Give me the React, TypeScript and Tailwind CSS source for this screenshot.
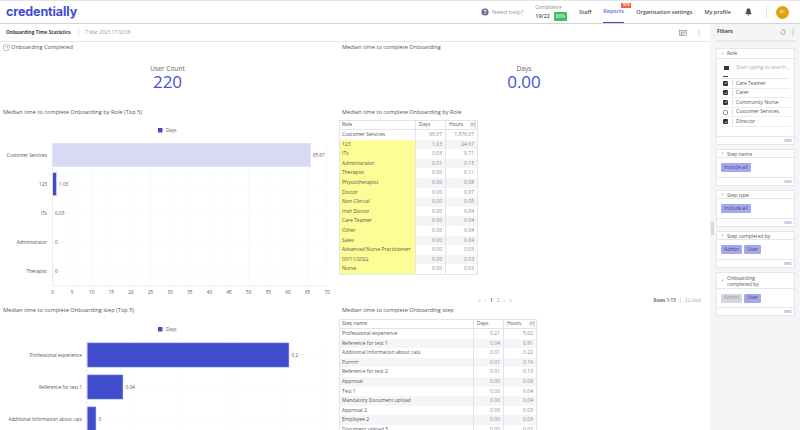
import React from "react";

const FONT = { fontFamily: '"Open Sans", sans-serif' };

const roleRows: [string, string, string][] = [
  ["Customer Services", "65.67", "1,576.07"],
  ["123", "1.03", "24.67"],
  ["ITs", "0.03", "0.71"],
  ["Administrator", "0.01", "0.15"],
  ["Therapist", "0.00", "0.11"],
  ["Physiotherapist", "0.00", "0.08"],
  ["Doctor", "0.00", "0.07"],
  ["Non-Clinical", "0.00", "0.05"],
  ["Irish Doctor", "0.00", "0.04"],
  ["Care Teamer", "0.00", "0.04"],
  ["Other", "0.00", "0.04"],
  ["Sales", "0.00", "0.04"],
  ["Advanced Nurse Practitionerr", "0.00", "0.03"],
  ["03/11/2022", "0.00", "0.03"],
  ["Nurse", "0.00", "0.03"],
];

const stepRows: [string, string, string][] = [
  ["Professional experience", "0.21", "5.02"],
  ["Reference for test 1", "0.04", "0.91"],
  ["Additional Information about cats", "0.01", "0.22"],
  ["Purrrrr", "0.01", "0.16"],
  ["Reference for test 2", "0.01", "0.13"],
  ["Approval", "0.00", "0.09"],
  ["Test 1", "0.00", "0.04"],
  ["Mandatory Document upload", "0.00", "0.04"],
  ["Approval 2", "0.00", "0.03"],
  ["Employee 2", "0.00", "0.03"],
  ["Document upload 5", "0.00", "0.02"],
];

function SortIcon() {
  return (
    <svg width="6" height="6" viewBox="0 0 6 6" fill="none" stroke="#777" strokeWidth="0.5">
      <path d="M0.5 1H5.5V0.5M0.5 2.5H4M0.5 4H3M5 1.5V5.5" />
    </svg>
  );
}

function DataTable({
  head,
  rows,
  widths,
  highlight,
}: {
  head: string;
  rows: [string, string, string][];
  widths: string[];
  highlight?: boolean;
}) {
  return (
    <div className="flex flex-col border border-[#e3e3ea] w-fit text-[5px] text-[#555] font-medium">
      <div className="flex h-[9px] items-center border-b border-[#e3e3ea]">
        <div className={`${widths[0]} pl-[2px]`}>{head}</div>
        <div className={`${widths[1]} h-full flex items-center border-l border-[#e3e3ea] pl-[3px]`}>Days</div>
        <div className={`${widths[2]} h-full flex items-center justify-between border-l border-[#e3e3ea] pl-[3px] pr-[1px]`}>
          Hours
          <SortIcon />
        </div>
      </div>
      {rows.map((r, i) => (
        <div key={r[0]} className={`flex h-[9.6px] items-center ${i % 2 === 1 ? "bg-[#f4f5f9]" : "bg-white"}`}>
          <div
            className={`${widths[0]} h-full flex items-center pl-[2px] whitespace-nowrap ${
              highlight && i > 0 ? "bg-[#fdfd96]" : ""
            }`}
          >
            {r[0]}
          </div>
          <div className={`${widths[1]} h-full flex items-center justify-end border-l border-[#e3e3ea] pr-[3px] text-[#888] font-normal`}>{r[1]}</div>
          <div className={`${widths[2]} h-full flex items-center justify-end border-l border-[#e3e3ea] pr-[3px] text-[#888] font-normal`}>{r[2]}</div>
        </div>
      ))}
    </div>
  );
}

function RoleChart() {
  const x0 = 52.5;
  const step = 3.925;
  const ticks = Array.from({ length: 15 }, (_, i) => i * 5);
  const cats: [string, string, number][] = [
    ["Customer Services", "65.67", 65.67],
    ["123", "1.03", 1.03],
    ["ITs", "0.03", 0.03],
    ["Administrator", "0", 0],
    ["Therapist", "0", 0],
  ];
  return (
    <svg width="338" height="186" viewBox="0 0 338 186" style={FONT} className="mt-[3px]">
      <rect x="158" y="8" width="4.5" height="4.5" fill="#3f4dcc" />
      <text x="166" y="12.4" fontSize="4.6" fill="#555">Days</text>
      {ticks.map((t) => (
        <g key={t}>
          <line x1={x0 + t * step} x2={x0 + t * step} y1="23" y2="166" stroke="#f5f5f8" strokeWidth="0.5" />
          <text x={x0 + t * step} y="174" fontSize="4.6" fill="#555" textAnchor="middle">{t}</text>
        </g>
      ))}
      {cats.map((c, i) => {
        const cy = 35 + i * 29.2;
        const w = c[2] * step;
        return (
          <g key={c[0]}>
            <line x1={x0} x2="327" y1={cy} y2={cy} stroke="#f5f5f8" strokeWidth="0.5" />
            <text x="47" y={cy + 1.6} fontSize="4.7" fill="#555" textAnchor="end">{c[0]}</text>
            {w > 0.5 && (
              <rect
                x={x0}
                y={cy - 11.5}
                width={w}
                height="23"
                fill={i === 0 ? "#d8daf5" : "#3f4dcc"}
                stroke="#d8daf5"
                strokeWidth="0.6"
              />
            )}
            <text x={x0 + w + 2.5} y={cy + 1.6} fontSize="4.7" fill="#555">{c[1]}</text>
          </g>
        );
      })}
      <line x1={x0} x2={x0} y1="23" y2="166" stroke="#e4e4ea" strokeWidth="0.7" />
      <line x1={x0} x2="327" y1="166" y2="166" stroke="#e4e4ea" strokeWidth="0.7" />
    </svg>
  );
}

function StepChart() {
  const x0 = 87;
  const cats: [string, string, number][] = [
    ["Professional experience", "0.2", 202],
    ["Reference for test 1", "0.04", 36],
    ["Additional Information about cats", "0", 9],
  ];
  return (
    <svg width="338" height="115" viewBox="0 0 338 115" style={FONT}>
      <rect x="158" y="12" width="4.5" height="4.5" fill="#3f4dcc" />
      <text x="166" y="16.4" fontSize="4.6" fill="#555">Days</text>
      {[135, 183, 232, 281, 327].map((x) => (
        <line key={x} x1={x} x2={x} y1="26" y2="115" stroke="#f5f5f8" strokeWidth="0.5" />
      ))}
      {cats.map((c, i) => {
        const cy = 40 + i * 32;
        return (
          <g key={c[0]}>
            <line x1={x0} x2="327" y1={cy} y2={cy} stroke="#f5f5f8" strokeWidth="0.5" />
            <text x="82" y={cy + 1.6} fontSize="4.7" fill="#555" textAnchor="end">{c[0]}</text>
            <rect x={x0} y={cy - 12.2} width={c[2]} height="24.4" fill="#3f4dcc" stroke="#c5c9f3" strokeWidth="0.6" />
            <text x={x0 + c[2] + 2.5} y={cy + 1.6} fontSize="4.7" fill="#555">{c[1]}</text>
          </g>
        );
      })}
      <line x1={x0} x2={x0} y1="26" y2="115" stroke="#e4e4ea" strokeWidth="0.7" />
    </svg>
  );
}

function Toggle() {
  return (
    <div className="h-[8px] border-t border-[#e6e6ea] flex items-center justify-end pr-[2px]">
      <div className="w-[8px] h-[3.5px] rounded-full bg-[#c9ccf2] flex justify-end">
        <div className="w-[3.5px] h-[3.5px] rounded-full bg-white border border-[#ccc]" />
      </div>
    </div>
  );
}

function Chevron({ open }: { open?: boolean }) {
  return (
    <svg width="3" height="3" viewBox="0 0 4 4" fill="none" stroke="#666" strokeWidth="0.6" className="shrink-0">
      <path d={open ? "M0.5 1.2L2 2.8L3.5 1.2" : "M1.2 0.5L2.8 2L1.2 3.5"} />
    </svg>
  );
}

function Chip({ label, off }: { label: string; off?: boolean }) {
  return (
    <div
      className={`h-[9px] px-[3px] flex items-center rounded-[1px] text-[5px] ${
        off ? "bg-[#d4d6de] text-[#9a9aa5]" : "bg-[#a5a8ea] text-[#44467a]"
      }`}
    >
      {label}
    </div>
  );
}

function FilterCard({ title, chips, tall }: { title: React.ReactNode; chips: { label: string; off?: boolean }[]; tall?: boolean }) {
  return (
    <div className="bg-white border border-[#e6e6ea] flex flex-col text-[5px] text-[#555]">
      <div
        className={`flex items-center gap-[3px] pl-[4px] border-b border-[#e6e6ea] leading-[6px] ${
          tall ? "h-[16px]" : "h-[8px]"
        }`}
      >
        <Chevron />
        <span>{title}</span>
      </div>
      <div className={`flex items-center gap-[2px] pl-[4px] ${tall ? "h-[18px]" : "h-[19px]"}`}>
        {chips.map((c) => (
          <Chip key={c.label} label={c.label} off={c.off} />
        ))}
      </div>
      <Toggle />
    </div>
  );
}

function Check({ on }: { on: boolean }) {
  return on ? (
    <div className="w-[5px] h-[5px] rounded-[1px] bg-[#333] flex items-center justify-center">
      <svg width="4" height="4" viewBox="0 0 4 4" fill="none" stroke="#fff" strokeWidth="0.6">
        <path d="M0.6 2L1.6 3L3.4 0.9" />
      </svg>
    </div>
  ) : (
    <div className="w-[5px] h-[5px] rounded-[1.5px] border border-[#888] bg-white" />
  );
}

function RoleCard() {
  const items: [string, boolean][] = [
    ["Care Teamer", true],
    ["Carer", true],
    ["Community Nurse", true],
    ["Customer Services", false],
    ["Director", true],
  ];
  return (
    <div className="bg-white border border-[#e6e6ea] flex flex-col text-[5px] text-[#555]">
      <div className="h-[10px] flex items-center gap-[3px] pl-[4px] border-b border-[#e6e6ea]">
        <Chevron open />
        <span>Role</span>
      </div>
      <div className="h-[77px] px-[4px] flex flex-col">
        <div className="h-[16px] flex items-center gap-[8px] pl-[3px] mt-[1px]">
          <div className="w-[4.5px] h-[4.5px] bg-[#333] rounded-[0.5px]" />
          <span className="text-[#aaa] text-[5px] whitespace-nowrap">Start typing to search...</span>
        </div>
        <div className="h-[3px] border-b border-[#e6e6ea] pl-[2px]">
          <div className="w-[5px] h-[1px] bg-[#444]" />
        </div>
        {items.map(([label, on]) => (
          <div key={label} className="h-[9.6px] flex items-center border-b border-[#eeeef1] pl-[2px]">
            <Check on={on} />
            <div className="h-[6px] w-px bg-[#ddd] ml-[4px] mr-[3px]" />
            <span>{label}</span>
          </div>
        ))}
      </div>
      <Toggle />
    </div>
  );
}

function Sidebar() {
  return (
    <aside className="w-[90px] shrink-0 bg-[#f5f5f7] flex relative h-full">
      <div className="absolute left-[1px] top-[198px] w-[3px] h-[13px] bg-[#d8d8dc]" />
      <div className="flex-1 flex flex-col pl-[6px] pr-[5px]">
        <div className="h-[18px] shrink-0 flex items-center justify-between border-b-2 border-[#e8e8ec]">
          <span className="text-[5px] font-bold text-[#444] pl-[1px]">Filters</span>
          <div className="flex items-center gap-[6px] pr-[1px]">
            <svg width="6" height="6" viewBox="0 0 6 6" fill="none" stroke="#666" strokeWidth="0.5">
              <path d="M3 0.9A2.2 2.2 0 1 1 1 2.2M3 0.9L2.1 0.2M3 0.9L2.2 1.7" />
            </svg>
            <svg width="2" height="6" viewBox="0 0 2 6" fill="#666">
              <circle cx="1" cy="0.8" r="0.5" />
              <circle cx="1" cy="3" r="0.5" />
              <circle cx="1" cy="5.2" r="0.5" />
            </svg>
          </div>
        </div>
        <div className="flex flex-col gap-[4px] mt-[6px]">
          <RoleCard />
          <FilterCard title="Step name" chips={[{ label: "Include all" }]} />
          <FilterCard title="Step type" chips={[{ label: "Include all" }]} />
          <FilterCard title="Step completed by" chips={[{ label: "Admin" }, { label: "User" }]} />
          <FilterCard
            tall
            title={
              <>
                Onboarding
                <br />
                completed by
              </>
            }
            chips={[{ label: "Admin", off: true }, { label: "User" }]}
          />
        </div>
      </div>
    </aside>
  );
}

function Header() {
  return (
    <header className="h-[24px] shrink-0 bg-white border-t border-[#e4e4e4] border-b border-b-[#d4d4d4] flex items-center relative">
      <div
        className="pl-[6px] text-[12.5px] font-bold text-[#3f4dcc] tracking-[-0.1px]"
        style={{ fontFamily: "Inter, sans-serif" }}
      >
        credentially
      </div>
      <div className="ml-auto flex items-center h-full text-[5.45px] font-semibold text-[#50505a]">
        <svg width="8" height="8" viewBox="0 0 8 8" className="mr-[3px]">
          <circle cx="4" cy="4" r="3.6" fill="#6b7088" />
          <text x="4" y="5.9" fontSize="5.5" fill="#fff" textAnchor="middle" fontWeight="700">?</text>
        </svg>
        <span className="text-[#9a9aa5] text-[6px] font-normal mr-[12px]">Need help?</span>
        <div className="flex flex-col mr-[12px] leading-[7px]">
          <span className="text-[4.8px] font-normal text-[#888]">Compliance</span>
          <div className="flex items-center gap-[4px] mt-[1px]">
            <span>19/22</span>
            <span className="bg-[#3fbf64] text-[#d8f5df] rounded-[1px] h-[9px] px-[2px] flex items-center text-[4.6px]">86%</span>
          </div>
        </div>
        <span className="mr-[12px]">Staff</span>
        <div className="relative h-full flex items-center border-b border-[#3f4dcc] text-[#5f68d8] mr-[12px] w-[21px]">
          Reports
          <span className="absolute -right-[7px] top-[2px] bg-[#f4603f] text-white text-[2.6px] h-[5px] w-[10px] flex items-center justify-center rounded-[0.5px]">BETA</span>
        </div>
        <span className="mr-[12px] whitespace-nowrap">Organisation settings</span>
        <span className="mr-[14px] whitespace-nowrap">My profile</span>
        <svg width="7" height="8" viewBox="0 0 7 8" fill="#50505a" className="mr-[14px]">
          <path d="M3.5 0.3C2 0.5 1.4 1.7 1.4 3.2C1.4 4.5 0.9 5.1 0.4 5.7V6.2H6.6V5.7C6.1 5.1 5.6 4.5 5.6 3.2C5.6 1.7 5 0.5 3.5 0.3ZM2.6 6.7C2.7 7.3 3.1 7.6 3.5 7.6C3.9 7.6 4.3 7.3 4.4 6.7Z" />
        </svg>
        <div className="w-px h-[14px] bg-[#e6e6e6] mr-[9px]" />
        <div
          className="w-[13px] h-[13px] rounded-full bg-[#e2a013] text-[#f8e7b8] text-[5px] flex items-center justify-center mr-[11px]"
          style={{ fontFamily: '"Liberation Serif", serif' }}
        >
          IE
        </div>
      </div>
    </header>
  );
}

function Title({ children, className = "" }: { children: React.ReactNode; className?: string }) {
  return <div className={`text-[5.65px] leading-[10px] text-[#555] whitespace-nowrap ${className}`}>{children}</div>;
}

function Kpi({ label, value }: { label: string; value: string }) {
  return (
    <div className="flex flex-col items-center mt-[12px]">
      <span className="text-[6.6px] leading-[9px] text-[#666]">{label}</span>
      <span className="text-[17px] leading-[17px] text-[#4452d6]">{value}</span>
    </div>
  );
}

export default function App() {
  return (
    <div className="w-[800px] h-[430px] overflow-hidden bg-white flex flex-col" style={FONT}>
      <Header />
      <div className="flex-1 flex min-h-0">
        <div className="w-[710px] shrink-0 flex flex-col min-h-0">
          <div className="h-[18px] shrink-0 border-b border-[#e8e8ec] flex items-center">
            <span className="pl-[6px] text-[4.8px] font-bold text-[#444] w-[78px] whitespace-nowrap">Onboarding Time Statistics</span>
            <div className="w-px h-[9px] bg-[#e8e8ec]" />
            <span className="pl-[6px] text-[4.8px] text-[#999]">7 Mar 2023 17:02:08</span>
            <div className="ml-auto flex items-center gap-[11px] pr-[10px]">
              <svg width="8" height="6" viewBox="0 0 8 6" fill="none" stroke="#666" strokeWidth="0.5">
                <rect x="0.4" y="0.4" width="7.2" height="5.2" />
                <path d="M1.5 2H6.5M1.5 3.2H6.5M1.5 4.4H4" />
              </svg>
              <svg width="2" height="6" viewBox="0 0 2 6" fill="#777">
                <circle cx="1" cy="0.8" r="0.5" />
                <circle cx="1" cy="3" r="0.5" />
                <circle cx="1" cy="5.2" r="0.5" />
              </svg>
            </div>
          </div>
          <main className="flex-1 min-h-0 grid grid-cols-[338px_372px] grid-rows-[64px_198px_126px] overflow-hidden">
            <section className="pl-[3px] pr-[6px]">
              <Title className="flex items-center gap-[1px]">
                <svg width="7" height="7" viewBox="0 0 7 7" fill="none" stroke="#888" strokeWidth="0.5">
                  <rect x="0.5" y="0.8" width="5.6" height="5.6" rx="0.8" />
                  <path d="M2 2.5H4.5V4.5" />
                </svg>
                Onboarding Completed
              </Title>
              <Kpi label="User Count" value="220" />
            </section>
            <section className="pl-[4px] pr-[4px]">
              <Title>Median time to complete Onboarding</Title>
              <Kpi label="Days" value="0.00" />
            </section>
            <section className="pt-[1px]">
              <Title className="pl-[3px]">Median time to complete Onboarding by Role (Top 5)</Title>
              <RoleChart />
            </section>
            <section className="pl-[1px] pt-[1px] flex flex-col">
              <Title className="pl-[3px] mb-[3px]">Median time to complete Onboarding by Role</Title>
              <DataTable head="Role" rows={roleRows} widths={["w-[75px]", "w-[30px]", "w-[32px]"]} highlight />
              <div className="mt-[22px] pr-[9px] relative flex items-center justify-end h-[7px] text-[4.6px]">
                <div className="absolute left-[139px] top-0 h-full flex items-center gap-[4px] text-[#aaa] text-[5px]">
                  <span>«</span>
                  <span>‹</span>
                  <span className="text-[#555] font-semibold">1</span>
                  <span>2</span>
                  <span>›</span>
                  <span>»</span>
                </div>
                <span className="font-semibold text-[#555]">Rows 1-15</span>
                <div className="w-px h-[6px] bg-[#e0e0e0] mx-[4px]" />
                <span className="text-[#aaa]">22 total</span>
              </div>
            </section>
            <section className="pt-[1px] overflow-hidden">
              <Title className="pl-[3px]">Median time to complete Onboarding step (Top 5)</Title>
              <StepChart />
            </section>
            <section className="pl-[1px] pt-[1px] overflow-hidden">
              <Title className="pl-[3px] mb-[4px]">Median time to complete Onboarding step</Title>
              <DataTable head="Step name" rows={stepRows} widths={["w-[133px]", "w-[30px]", "w-[33px]"]} />
            </section>
          </main>
        </div>
        <Sidebar />
      </div>
    </div>
  );
}
